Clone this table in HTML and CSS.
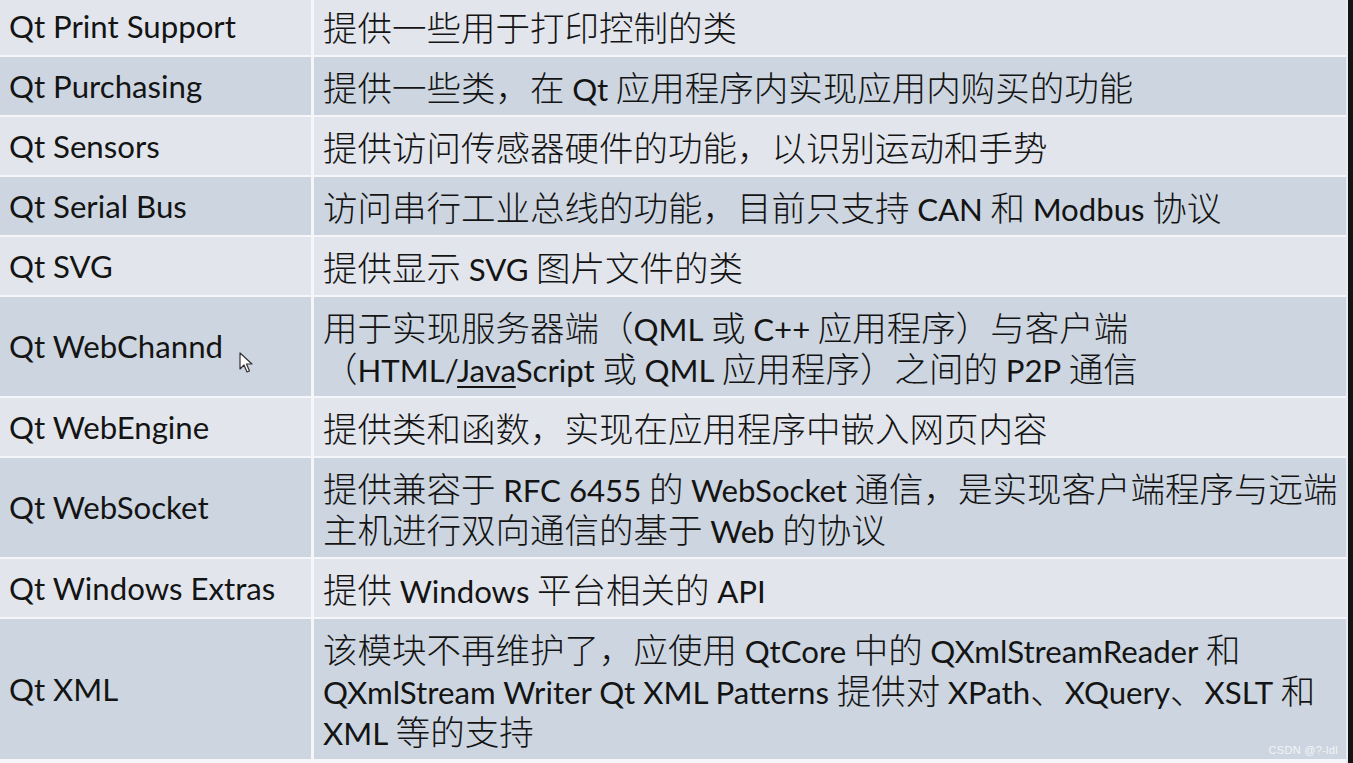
FILE: index.html
```html
<!DOCTYPE html>
<html lang="zh-CN">
<head>
<meta charset="utf-8">
<title>Qt 模块</title>
<link rel="stylesheet" href="styles.css">
</head>
<body>
<div class="page">
  <div class="table">
    <div class="row light"><div class="name" lang="en">Qt Print Support</div><div class="desc">提供一些用于打印控制的类</div></div>
    <div class="row dark"><div class="name" lang="en">Qt Purchasing</div><div class="desc">提供一些类，在 <span class="en" lang="en">Qt</span> 应用程序内实现应用内购买的功能</div></div>
    <div class="row light"><div class="name" lang="en">Qt Sensors</div><div class="desc">提供访问传感器硬件的功能，以识别运动和手势</div></div>
    <div class="row dark"><div class="name" lang="en">Qt Serial Bus</div><div class="desc">访问串行工业总线的功能，目前只支持 <span class="en" lang="en">CAN</span> 和 <span class="en" lang="en">Modbus</span> 协议</div></div>
    <div class="row light"><div class="name" lang="en">Qt SVG</div><div class="desc">提供显示 <span class="en" lang="en">SVG</span> 图片文件的类</div></div>
    <div class="row dark"><div class="name" lang="en">Qt WebChannd</div><div class="desc">用于实现服务器端（<span class="en" lang="en">QML</span> 或 <span class="en" lang="en">C++</span> 应用程序）与客户端<br>（<span class="en" lang="en">HTML/<span class="ul">Java</span>Script</span> 或 <span class="en" lang="en">QML</span> 应用程序）之间的 <span class="en" lang="en">P2P</span> 通信</div></div>
    <div class="row light"><div class="name" lang="en">Qt WebEngine</div><div class="desc">提供类和函数，实现在应用程序中嵌入网页内容</div></div>
    <div class="row dark"><div class="name" lang="en">Qt WebSocket</div><div class="desc">提供兼容于 <span class="en" lang="en">RFC 6455</span> 的 <span class="en" lang="en">WebSocket</span> 通信，是实现客户端程序与远端<br>主机进行双向通信的基于 <span class="en" lang="en">Web</span> 的协议</div></div>
    <div class="row light"><div class="name" lang="en">Qt Windows Extras</div><div class="desc">提供 <span class="en" lang="en">Windows</span> 平台相关的 <span class="en" lang="en">API</span></div></div>
    <div class="row dark"><div class="name" lang="en">Qt XML</div><div class="desc">该模块不再维护了，应使用 <span class="en" lang="en">QtCore</span> 中的 <span class="en" lang="en">QXmlStreamReader</span> 和<br><span class="en" lang="en">QXmlStream Writer Qt XML Patterns</span> 提供对 <span class="en" lang="en">XPath</span>、<span class="en" lang="en">XQuery</span>、<span class="en" lang="en">XSLT</span> 和<br><span class="en" lang="en">XML</span> 等的支持</div></div>
  </div>
  <div class="gutter"></div>
  <div class="frame"></div>
  <svg class="cursor" width="14" height="22" viewBox="0 0 14 22" aria-hidden="true">
    <path d="M1 1 L1 17 L5 13 L8 20 L10.5 19 L7.5 12 L13 12 Z" fill="#fff" stroke="#333" stroke-width="1.2" stroke-linejoin="round"/>
  </svg>
  <div class="watermark">CSDN @?-ldl</div>
</div>
</body>
</html>
```
FILE: styles.css
```css
html, body {
  margin: 0;
  padding: 0;
  background: #f3f5f8;
}
.page {
  position: relative;
  display: flex;
  width: 1353px;
  height: 763px;
  overflow: hidden;
  font-family: "Noto Sans CJK SC", sans-serif;
  color: #141414;
}
.table {
  width: 1346px;
  margin-top: -3px;
  display: flex;
  flex-direction: column;
  gap: 2px;
  background: #f4f6f9;
}
.row {
  display: grid;
  grid-template-columns: 311px 1fr;
  column-gap: 3px;
}
.row.light > div { background: #e2e6ec; }
.row.dark > div { background: #cdd6e0; }
.name, .desc {
  line-height: 41px;
  padding: 8.5px 9px;
  white-space: nowrap;
}
.name {
  display: flex;
  align-items: center;
  font-family: "Lato", sans-serif;
  font-size: 31.2px;
}
.desc {
  font-size: 34.5px;
  font-weight: 300;
}
.en {
  font-family: "Lato", sans-serif;
  font-size: 31.2px;
  font-weight: 400;
  line-height: 1;
}
.ul {
  text-decoration: underline;
  text-underline-offset: 4px;
  text-decoration-thickness: 2px;
}
.gutter {
  width: 2px;
  background: #e9ecf0;
}
.frame {
  flex: 1;
  background: #141414;
}
.cursor {
  position: absolute;
  left: 239px;
  top: 352px;
}
.watermark {
  position: absolute;
  right: 15px;
  bottom: 7px;
  font-family: "Liberation Sans", sans-serif;
  font-size: 11px;
  color: #f2f4f6;
  letter-spacing: 0.3px;
}
```
